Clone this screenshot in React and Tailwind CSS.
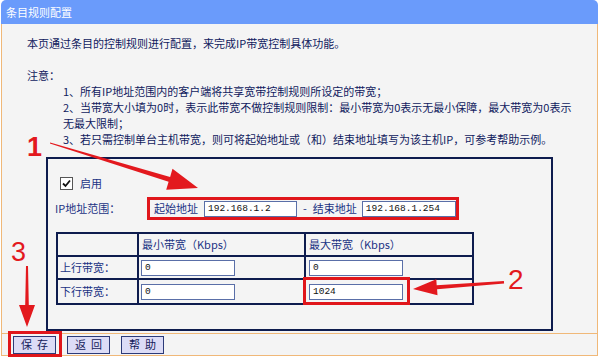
import React from 'react';

const font = { fontFamily: '"Noto Sans CJK SC", "Liberation Sans", sans-serif' };

const Field = ({ value, w = 'w-[94px]' }) => (
    <div className={`${w} h-[16px] bg-white border border-[#5a6fa8] flex items-center pl-[3px] text-[9.5px] text-[#111] font-['Liberation_Mono',monospace] leading-none`}>
        {value}
    </div>
);

const Btn = ({ children }) => (
    <button className="w-[43px] h-[18px] bg-[#dcdcf6] border border-[#2c3a78] text-[11px] leading-none text-[#14205a] tracking-[5px] pl-[5px] flex items-center justify-center">
        {children}
    </button>
);

const App = () => {
    return (
        <div className="relative w-[600px] h-[358px] bg-white overflow-hidden" style={font}>
            <div className="ml-[1px] w-[597px]">
                {/* Title bar */}
                <div className="h-[24px] bg-[#6a9bfb] rounded-t-[5px] flex items-center pl-[5px] text-white text-[11px] leading-none">
                    条目规则配置
                </div>

                <div className="bg-[#f4f4f4] border-l border-r border-[#f0b878] h-[309px]">
                    {/* Description */}
                    <div className="pt-[11px] pl-[25px] text-[11px] leading-[16px] text-[#101a5e] whitespace-nowrap">
                        <div>本页通过条目的控制规则进行配置，来完成IP带宽控制具体功能。</div>
                        <div className="h-[16px]" />
                        <div>注意：</div>
                        <div className="pl-[36px]">
                            <div>1、所有IP地址范围内的客户端将共享宽带控制规则所设定的带宽；</div>
                            <div>2、当带宽大小填为0时，表示此带宽不做控制规则限制：最小带宽为0表示无最小保障，最大带宽为0表示</div>
                            <div>无最大限制；</div>
                            <div>3、若只需控制单台主机带宽，则可将起始地址或（和）结束地址填写为该主机IP，可参考帮助示例。</div>
                        </div>
                    </div>

                    {/* Rule panel */}
                    <div className="mt-[10px] ml-[44px] w-[507px] h-[174px] border-2 border-[#0e1c4e] pt-[18px] pl-[12px] text-[11px] text-[#1b3384]">
                        <div className="flex items-center gap-[7px] h-[13px]">
                            <span className="w-[13px] h-[13px] bg-white border border-[#555] flex items-center justify-center">
                                <svg width="9" height="9" viewBox="0 0 9 9">
                                    <path d="M1 4.5 L3.5 7 L8 1.5" fill="none" stroke="#111" strokeWidth="1.8" />
                                </svg>
                            </span>
                            <span className="leading-none">启用</span>
                        </div>

                        <div className="mt-[7px] flex items-center">
                            <span className="w-[85px] -ml-[5px] leading-none">IP地址范围：</span>
                            <div className="ml-[7px] h-[23px] border-[3px] border-[#e0161b] flex items-center pl-[4px]">
                                <span className="leading-none">起始地址</span>
                                <div className="ml-[6px]"><Field value="192.168.1.2" w="w-[93px]" /></div>
                                <span className="ml-[6px] leading-none">-</span>
                                <span className="ml-[6px] leading-none">结束地址</span>
                                <div className="ml-[5px]"><Field value="192.168.1.254" w="w-[94px]" /></div>
                            </div>
                        </div>

                        {/* Bandwidth table */}
                        <table className="mt-[12px] -ml-[4px] border-collapse border-2 border-[#0e1c4e]">
                            <tbody>
                                <tr className="h-[23px]">
                                    <td className="w-[81px] border-2 border-[#0e1c4e]" />
                                    <td className="w-[167px] border-2 border-[#0e1c4e] pl-[3px] leading-none">最小带宽（Kbps）</td>
                                    <td className="w-[168px] border-2 border-[#0e1c4e] pl-[3px] leading-none">最大带宽（Kbps）</td>
                                </tr>
                                <tr className="h-[23px]">
                                    <td className="border-2 border-[#0e1c4e] pl-[2px] leading-none">上行带宽：</td>
                                    <td className="border-2 border-[#0e1c4e] pl-[2px]"><Field value="0" /></td>
                                    <td className="border-2 border-[#0e1c4e] pl-[3px]"><Field value="0" /></td>
                                </tr>
                                <tr className="h-[25px]">
                                    <td className="border-2 border-[#0e1c4e] pl-[2px] leading-none">下行带宽：</td>
                                    <td className="border-2 border-[#0e1c4e] pl-[2px]"><Field value="0" /></td>
                                    <td className="border-2 border-[#0e1c4e] pl-[3px]"><Field value="1024" /></td>
                                </tr>
                            </tbody>
                        </table>
                    </div>
                </div>

                {/* Button bar */}
                <div className="h-[23px] border border-[#f0b878] bg-[#f4f4f4] flex items-center gap-[11px] pl-[11px]">
                    <Btn>保存</Btn>
                    <Btn>返回</Btn>
                    <Btn>帮助</Btn>
                </div>
            </div>

            {/* Annotations */}
            <div className="absolute left-[303px] top-[277px] w-[107px] h-[28px] border-[3px] border-[#e0161b]" />
            <div className="absolute left-[8px] top-[331px] w-[54px] h-[26px] border-[3px] border-[#e0161b]" />

            <span className="absolute left-[27px] top-[134px] text-[27px] leading-none font-bold text-[#e3191e] font-['Liberation_Sans',sans-serif]">1</span>
            <span className="absolute left-[508px] top-[266px] text-[28px] leading-none text-[#e3191e] font-['Liberation_Sans',sans-serif]">2</span>
            <span className="absolute left-[11px] top-[239px] text-[27px] leading-none text-[#e3191e] font-['Liberation_Sans',sans-serif]">3</span>

            <svg className="absolute inset-0 pointer-events-none" width="600" height="358" viewBox="0 0 600 358">
                <polygon fill="#e3191e" points="49.9,143.5 168.6,181.7 166.2,189.8 198,188 172.5,168.8 170.1,176.9 50.1,142.5" />
                <polygon fill="#e3191e" points="503.9,281 436.7,285.2 436.3,279.2 413,289 437.5,295.2 437.1,289.2 504.1,283.5" />
                <polygon fill="#e3191e" points="26,266 25.2,305 19,305 27,327 35,305 28.8,305 28,266" />
            </svg>
        </div>
    );
};

export default App;
